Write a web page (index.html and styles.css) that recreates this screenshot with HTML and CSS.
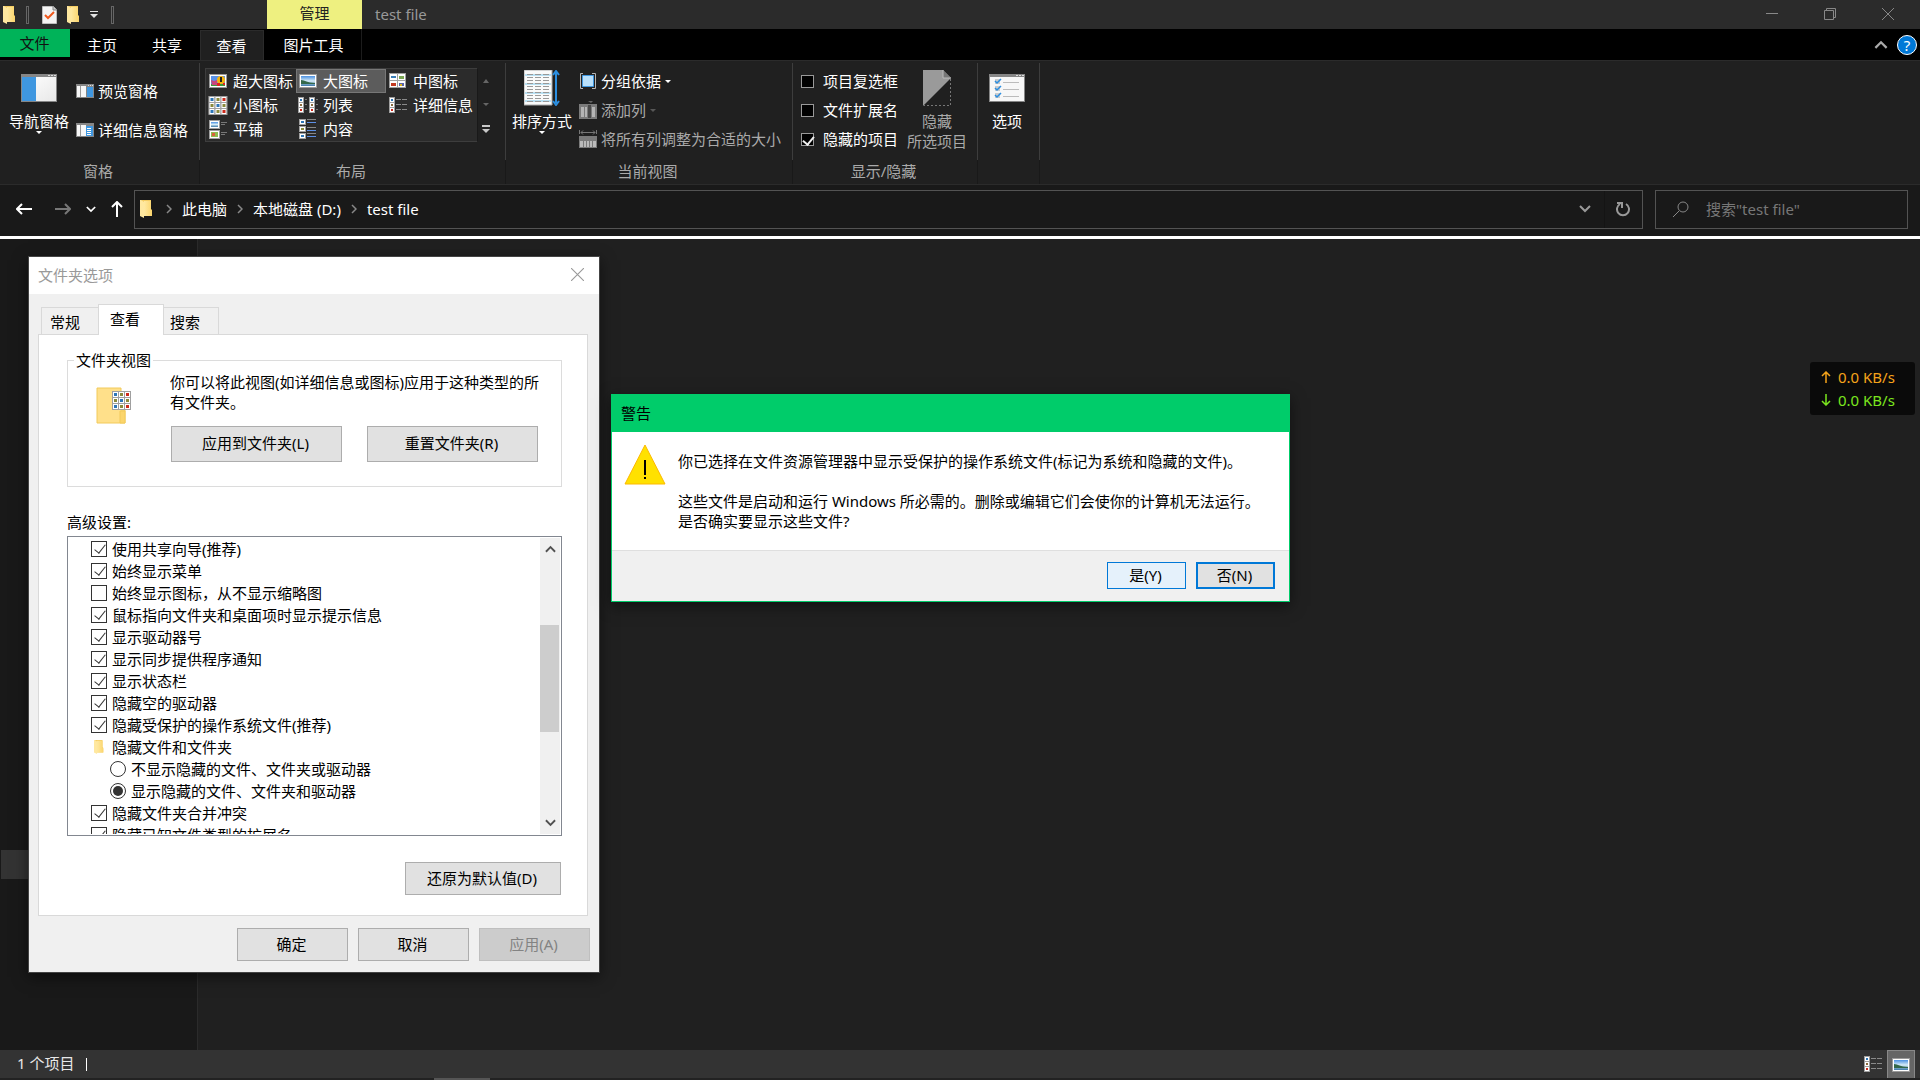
FILE: index.html
```html
<!DOCTYPE html>
<html lang="zh-CN">
<head>
  <meta charset="UTF-8" />
  <meta name="viewport" content="width=device-width, initial-scale=1" />
  <title>test file</title>
  <link rel="stylesheet" href="styles.css">
</head>
<body>

  <!-- 图标 -->
  <svg class="defs" width="0" height="0" aria-hidden="true">
    <defs>
      <linearGradient id="sky" x1="0" y1="0" x2="0" y2="1">
        <stop offset="0" stop-color="#4a90e2" /><stop offset=".5" stop-color="#d6ecf7" /><stop offset="1" stop-color="#3c78a8" />
      </linearGradient>
      <linearGradient id="fold" x1="0" y1="0" x2="1" y2="0">
        <stop offset="0" stop-color="#ffe9a2" /><stop offset="1" stop-color="#fbd56c" />
      </linearGradient>
      <linearGradient id="pane" x1="0" y1="0" x2="1" y2="1">
        <stop offset="0" stop-color="#fff" /><stop offset="1" stop-color="#e8e8e8" />
      </linearGradient>
      <symbol id="folder" viewBox="0 0 13 18">
        <path d="M1 0h10v9l1 1v6H4z" fill="#f5cd63" />
        <path d="M0 0h1l3 2v16l-4-2z" fill="#ffe8a0" />
        <path d="M4 1h7v9l1 1v5H4z" fill="url(#fold)" />
      </symbol>
      <symbol id="pic" viewBox="0 0 18 14">
        <path d="M0 0h18v14H0z" fill="#9a9a9a" /><path d="M1 1h16v12H1z" fill="#fff" />
        <path d="M2 2h14v10H2z" fill="url(#sky)" />
        <path d="M2 6c4 0 6 3 14 3v1H2z" fill="#33684a" />
      </symbol>
      <symbol id="pic-xl" viewBox="0 0 18 14">
        <path d="M0 0h18v14H0z" fill="#9a9a9a" /><path d="M1 1h16v12H1z" fill="#fff" />
        <path d="M2 2h14v10H2z" fill="#5b93e8" /><path d="M2 10h14v2H2z" fill="#3b9a3b" />
        <circle cx="12" cy="6" r="4" fill="#f7b50c" /><path d="M11 3h2v5h-2z" fill="#222" />
        <path d="M2 6l3 1 3-1v5H3z" fill="#c8457c" /><path d="M8 9h3v3H8zM14 9h2v2h-2z" fill="#d22" />
      </symbol>
      <symbol id="th-b" viewBox="0 0 6 6"><path d="M0 0h6v6H0z" fill="#a0a0a0" /><path d="M1 1h5v5H1z" fill="#fff" /><path d="M2 2h3v3H2z" fill="#2d76b8" /></symbol>
      <symbol id="th-g" viewBox="0 0 6 6"><path d="M0 0h6v6H0z" fill="#a0a0a0" /><path d="M1 1h5v5H1z" fill="#fff" /><path d="M2 2h3v3H2z" fill="#8a8a3c" /></symbol>
      <symbol id="th-r" viewBox="0 0 6 6"><path d="M0 0h6v6H0z" fill="#a0a0a0" /><path d="M1 1h5v5H1z" fill="#fff" /><path d="M2 2h3v3H2z" fill="#cc2a1c" /></symbol>
      <symbol id="grid9" viewBox="0 0 19 19">
        <path d="M0 0h19v19H0z" fill="#a0a0a0" />
        <use href="#th-b" width="6" height="6" /><use href="#th-g" x="6" width="6" height="6" /><use href="#th-r" x="12" width="6" height="6" />
        <use href="#th-g" y="6" width="6" height="6" /><use href="#th-b" x="6" y="6" width="6" height="6" /><use href="#th-g" x="12" y="6" width="6" height="6" />
        <use href="#th-b" y="12" width="6" height="6" /><use href="#th-g" x="6" y="12" width="6" height="6" /><use href="#th-r" x="12" y="12" width="6" height="6" />
      </symbol>
      <symbol id="grid4" viewBox="0 0 18 16">
        <path d="M0 0h17v15H0z" fill="#a0a0a0" /><path d="M1 1h7v6H1zM9 1h7v6H9zM1 8h7v6H1zM9 8h7v6H9z" fill="#fff" />
        <path d="M2 3h5v2H2z" fill="#3a7fb8" /><path d="M10 3h5v3h-5z" fill="#7aa653" /><path d="M2 10h5v3H2z" fill="#c33a22" /><path d="M10 10h5v3h-5z" fill="#5a63a8" /><path d="M11 11h2v2h-2z" fill="#e0b81e" />
      </symbol>
      <symbol id="v-list" viewBox="0 0 20 16">
        <path d="M0 0h6v16H0zM11 0h6v16h-6z" fill="#a0a0a0" />
        <path d="M1 1h4v4H1zM1 6h4v4H1zM1 11h4v4H1zM12 1h4v4h-4zM12 6h4v4h-4zM12 11h4v4h-4z" fill="#fff" />
        <path d="M2 2h2v2H2zM13 2h2v2h-2z" fill="#2d76b8" /><path d="M2 7h2v2H2zM13 7h2v2h-2z" fill="#8a6a3c" /><path d="M2 12h2v2H2zM13 12h2v2h-2z" fill="#cc2a1c" />
        <path d="M7 2.500h2M7 7.500h2M7 12.500h2M18 2.500h2M18 7.500h2M18 12.500h2" stroke="#7a7a7a" />
      </symbol>
      <symbol id="v-details" viewBox="0 0 18 16">
        <path d="M0 0h6v16H0z" fill="#a0a0a0" /><path d="M1 1h4v4H1zM1 6h4v4H1zM1 11h4v4H1z" fill="#fff" />
        <path d="M2 2h2v2H2z" fill="#2d76b8" /><path d="M2 7h2v2H2z" fill="#8a6a3c" /><path d="M2 12h2v2H2z" fill="#cc2a1c" />
        <path d="M7 2.500h5M13 2.500h5M7 7.500h5M13 7.500h5M7 12.500h5M13 12.500h5" stroke="#8a8a8a" />
      </symbol>
      <symbol id="v-tiles" viewBox="0 0 18 19">
        <path d="M0 0h11v9H0zM0 10h11v9H0z" fill="#a0a0a0" /><path d="M1 1h9v7H1zM1 11h9v7H1z" fill="#fff" />
        <path d="M2 2h7v5H2z" fill="url(#sky)" /><path d="M2 12h7v5H2z" fill="#8ebc50" /><path d="M3 13h3v3H3z" fill="#d8613a" />
        <path d="M12 2.500h6M12 4.500h4M12 12.500h6M12 14.500h4" stroke="#777" />
      </symbol>
      <symbol id="v-content" viewBox="0 0 18 20">
        <path d="M0 0h7v6H0zM0 7h7v6H0zM0 14h7v6H0z" fill="#a0a0a0" /><path d="M1 1h5v4H1zM1 8h5v4H1zM1 15h5v4H1z" fill="#fff" />
        <path d="M2 2h3v2H2zM2 16h3v2H2z" fill="#2d76b8" /><path d="M2 9h3v2H2z" fill="#8a8a3c" />
        <path d="M8 3.500h9M8 11.500h9M8 17.500h9" stroke="#5c8fe6" /><path d="M8 .5h9M8 8.500h9M8 14.500h9" stroke="#888" />
      </symbol>
      <symbol id="chev" viewBox="0 0 12 8"><path d="M1 1l5 5 5-5" fill="none" stroke="currentColor" stroke-width="2" /></symbol>
      <symbol id="chev-r" viewBox="0 0 6 10"><path d="M1 1l4 4-4 4" fill="none" stroke="currentColor" stroke-width="1.500" /></symbol>
      <symbol id="arrow" viewBox="0 0 16 12"><path d="M1 6h15M6 1L1 6l5 5" fill="none" stroke="currentColor" stroke-width="2" /></symbol>
      <symbol id="cross" viewBox="0 0 12 12"><path d="M0 0l12 12M12 0L0 12" stroke="currentColor" /></symbol>
    </defs>
  </svg>

  <div class="explorer">

    <!-- 标题栏 -->
    <header class="titlebar">
      <div class="quick">
        <svg width="13" height="18"><use href="#folder" /></svg>
        <i class="bar"></i>
        <button class="plain" aria-label="属性">
          <svg width="15" height="18" viewBox="0 0 15 18"><path d="M0 0h11l4 4v14H0z" fill="#f4f4f4" stroke="#888" /><path d="M11 0v4h4" fill="#ccc" stroke="#888" /><path d="M3 9l3 3 6-6" fill="none" stroke="#f0591e" stroke-width="2" /></svg>
        </button>
        <button class="plain" aria-label="新建文件夹"><svg width="13" height="18"><use href="#folder" /></svg></button>
        <button class="plain" aria-label="自定义"><svg width="8" height="8" viewBox="0 0 8 8"><path d="M0 0h8v1H0zM0 3h8L4 7z" fill="#e4e4e4" /></svg></button>
        <i class="bar"></i>
      </div>
      <div class="context-tab">管理</div>
      <h1>test file</h1>
      <div class="win-btns">
        <button class="plain" aria-label="最小化"><svg width="12" height="12" viewBox="0 0 12 12"><path d="M0 5.500h12" stroke="#888" /></svg></button>
        <button class="plain" aria-label="还原"><svg width="12" height="12" viewBox="0 0 12 12"><path d="M.5 2.500h9v9h-9zM2.500 2V.5h9v9H10" fill="none" stroke="#888" /></svg></button>
        <button class="plain" aria-label="关闭"><svg width="12" height="12"><use href="#cross" /></svg></button>
      </div>
    </header>

    <!-- 选项卡 -->
    <nav class="tabs">
      <button class="tab file">文件</button>
      <button class="tab">主页</button>
      <button class="tab">共享</button>
      <button class="tab active">查看</button>
      <button class="tab tools">图片工具</button>
      <div class="tabs-right">
        <button class="plain" aria-label="折叠功能区"><svg class="flip" width="14" height="9"><use href="#chev" /></svg></button>
        <button class="help" aria-label="帮助">?</button>
      </div>
    </nav>

    <!-- 功能区 -->
    <section class="ribbon">
      <div class="group g-panes">
        <div class="group-body">
          <button class="big low">
            <svg width="36" height="28" viewBox="0 0 36 28"><path d="M0 0h36v28H0z" fill="#868686" /><path d="M1 3h34v24H1z" fill="url(#pane)" /><path d="M1 3h14v24H1z" fill="#3f97e0" /><path d="M27 1h2v1h-2zM30 1h2v1h-2zM33 1h2v1h-2z" fill="#ddd" /></svg>
            <span>导航窗格</span>
            <i class="down"></i>
          </button>
          <div class="stack">
            <button class="small">
              <svg width="18" height="14" viewBox="0 0 18 14"><path d="M0 0h18v14H0z" fill="#868686" /><path d="M1 2h9v11H1z" fill="#f7f7f7" /><path d="M4 2h1v11H4z" fill="#999" /><path d="M11 3h6v10h-6z" fill="#3f97e0" /><path d="M12 1h1v1h-1zM14 1h1v1h-1zM16 1h1v1h-1z" fill="#ddd" /></svg>
              预览窗格
            </button>
            <button class="small">
              <svg width="18" height="14" viewBox="0 0 18 14"><path d="M0 0h18v14H0z" fill="#868686" /><path d="M1 2h9v11H1z" fill="#f7f7f7" /><path d="M4 2h1v11H4z" fill="#999" /><path d="M10 3h7v10h-7z" fill="#3f97e0" /><path d="M11 5.500h4M11 7.500h4M11 9.500h4M11 11.500h4" stroke="#fff" /></svg>
              详细信息窗格
            </button>
          </div>
        </div>
        <div class="group-name">窗格</div>
      </div>

      <div class="group g-layout">
        <div class="group-body">
          <div class="gallery">
            <button><svg width="18" height="14"><use href="#pic-xl" /></svg>超大图标</button>
            <button class="on"><svg width="18" height="14"><use href="#pic" /></svg>大图标</button>
            <button><svg width="18" height="16"><use href="#grid4" /></svg>中图标</button>
            <button><svg width="19" height="19"><use href="#grid9" /></svg>小图标</button>
            <button><svg width="20" height="16"><use href="#v-list" /></svg>列表</button>
            <button><svg width="18" height="16"><use href="#v-details" /></svg>详细信息</button>
            <button><svg width="18" height="19"><use href="#v-tiles" /></svg>平铺</button>
            <button><svg width="18" height="20"><use href="#v-content" /></svg>内容</button>
          </div>
          <div class="gallery-nav">
            <button class="plain" aria-label="上一行"><svg width="6" height="4" viewBox="0 0 6 4"><path d="M0 4l3-4 3 4z" fill="#666" /></svg></button>
            <button class="plain" aria-label="下一行"><svg width="6" height="4" viewBox="0 0 6 4"><path d="M0 0h6L3 3z" fill="#666" /></svg></button>
            <button class="plain" aria-label="更多"><svg width="8" height="8" viewBox="0 0 8 8"><path d="M0 0h8v2H0zM0 4h8L4 8z" fill="#c8c8c8" /></svg></button>
          </div>
        </div>
        <div class="group-name">布局</div>
      </div>

      <div class="group g-view">
        <div class="group-body">
          <button class="big">
            <svg width="36" height="36" viewBox="0 0 36 36"><path d="M0 0h28v35H0z" fill="#fafafa" stroke="#aaa" /><path d="M1 4h26v2H1zM1 13h26v2H1zM1 22h26v2H1zM1 30h26v2H1z" fill="#b9e0f2" /><path d="M3 4.500h22M3 7.500h22M3 10.500h22M3 13.500h22M3 16.500h22M3 19.500h22M3 22.500h22M3 25.500h22M3 28.500h22M3 31.500h22" stroke="#999" stroke-dasharray="6 2" /><path d="M32 2v31M29 5l3-4 3 4M29 31l3 4 3-4" fill="none" stroke="#2b8ee0" stroke-width="2" /></svg>
            <span>排序方式</span>
            <i class="down"></i>
          </button>
          <div class="stack">
            <button class="small">
              <svg width="18" height="17" viewBox="0 0 18 17"><path d="M4 .5H1.500v15H4M13 .5h3.500v15H13" fill="none" stroke="#b5b5b5" /><path d="M3.500 2.500h11v11h-11z" fill="#b9e0fb" stroke="#3f97e0" /></svg>
              分组依据<i class="down"></i>
            </button>
            <button class="small" disabled>
              <svg width="18" height="18" viewBox="0 0 18 18"><path d="M9 0h5l-2 2z" fill="#666" /><path d="M0 3h18v15H0z" fill="#7b7b7b" /><path d="M2 6h3v10H2zM6 6h2v10H6zM13 6h3v10h-3z" fill="#b5b5b5" /><path d="M9 4h3v13H9z" fill="#4a4a4a" /></svg>
              添加列<i class="down"></i>
            </button>
            <button class="small" disabled>
              <svg width="18" height="18" viewBox="0 0 18 18"><path d="M.5 0v4M17.500 0v4M2 2.500h14M4 .5l-2 2 2 2M14 .5l2 2-2 2" fill="none" stroke="#777" /><path d="M0 6h18v12H0z" fill="#7b7b7b" /><path d="M1 11h3v6H1zM5 11h2v6H5zM8 11h2v6H8zM11 11h2v6h-2zM14 11h3v6h-3z" fill="#bbb" /></svg>
              将所有列调整为合适的大小
            </button>
          </div>
        </div>
        <div class="group-name">当前视图</div>
      </div>

      <div class="group g-show">
        <div class="group-body">
          <div class="checks">
            <label><input type="checkbox" class="dark-check">项目复选框</label>
            <label><input type="checkbox" class="dark-check">文件扩展名</label>
            <label><input type="checkbox" class="dark-check" checked>隐藏的项目</label>
          </div>
          <button class="big" disabled>
            <svg width="28" height="36" viewBox="0 0 28 36"><path d="M0 0h20l8 8L0 36z" fill="#9a9a9a" /><path d="M20 0v8h8" fill="#777" stroke="#bbb" /><path d="M27.500 9v26.500H1" fill="none" stroke="#777" stroke-dasharray="2 2" /></svg>
            <span>隐藏<br>所选项目</span>
          </button>
        </div>
        <div class="group-name">显示/隐藏</div>
      </div>

      <div class="group g-options">
        <div class="group-body">
          <button class="big low">
            <svg width="36" height="28" viewBox="0 0 36 28"><path d="M0 0h36v28H0z" fill="#868686" /><path d="M1 3h34v24H1z" fill="#f7f7f7" /><path d="M27 1h2v1h-2zM30 1h2v1h-2zM33 1h2v1h-2z" fill="#ddd" /><path d="M6 5h5v5H6zM6 12h5v5H6zM6 19h5v5H6z" fill="#ccc" /><path d="M6 7l2 2 4-4M6 14l2 2 4-4M6 21l2 2 4-4" fill="none" stroke="#2b8ee0" stroke-width="1.500" /><path d="M14 8.500h16M14 15.500h16M14 22.500h16" stroke="#bbb" /></svg>
            <span>选项</span>
          </button>
        </div>
        <div class="group-name"></div>
      </div>
    </section>

    <!-- 地址栏 -->
    <div class="address-row">
      <div class="history">
        <button class="plain" aria-label="后退"><svg width="16" height="12"><use href="#arrow" /></svg></button>
        <button class="plain dim" aria-label="前进"><svg class="flip-x" width="16" height="12"><use href="#arrow" /></svg></button>
        <button class="plain" aria-label="最近"><svg width="10" height="7"><use href="#chev" /></svg></button>
        <button class="plain" aria-label="上移"><svg width="12" height="16" viewBox="0 0 12 16"><path d="M6 1v15M1 6l5-5 5 5" fill="none" stroke="currentColor" stroke-width="2" /></svg></button>
      </div>
      <div class="address">
        <svg width="13" height="18"><use href="#folder" /></svg>
        <svg class="sep" width="6" height="10"><use href="#chev-r" /></svg>
        <a href="#">此电脑</a>
        <svg class="sep" width="6" height="10"><use href="#chev-r" /></svg>
        <a href="#">本地磁盘 (D:)</a>
        <svg class="sep" width="6" height="10"><use href="#chev-r" /></svg>
        <a href="#">test file</a>
        <div class="address-btns">
          <button class="plain" aria-label="以前的位置"><svg width="12" height="8"><use href="#chev" /></svg></button>
          <button class="plain" aria-label="刷新"><svg width="15" height="15" viewBox="0 0 15 15"><path d="M10 2a6 6 0 1 1-6 0M1 1h5v5" fill="none" stroke="currentColor" stroke-width="2" /></svg></button>
        </div>
      </div>
      <label class="search">
        <svg width="16" height="16" viewBox="0 0 16 16"><circle cx="10" cy="6" r="5" fill="none" stroke="currentColor" /><path d="M6 10l-6 6" stroke="currentColor" /></svg>
        <input type="text" aria-label="搜索" placeholder='搜索"test file"'>
      </label>
    </div>

    <!-- 内容 -->
    <main class="content">
      <aside class="nav-pane"><div class="nav-item"></div></aside>
      <div class="files"></div>
    </main>

    <!-- 状态栏 -->
    <footer class="status">
      <span class="count">1 个项目</span>
      <div class="view-switch">
        <button class="plain" aria-label="详细信息"><svg width="18" height="16"><use href="#v-details" /></svg></button>
        <button class="plain on" aria-label="大图标"><svg width="18" height="14"><use href="#pic" /></svg></button>
      </div>
    </footer>
    <div class="taskbar-edge"><i></i></div>
  </div>

  <!-- 文件夹选项 -->
  <div class="window options" role="dialog" aria-label="文件夹选项">
    <div class="window-title">
      <h2>文件夹选项</h2>
      <button class="plain" aria-label="关闭"><svg width="13" height="13" viewBox="0 0 12 12"><use href="#cross" /></svg></button>
    </div>
    <div class="page-tabs">
      <button>常规</button>
      <button class="current">查看</button>
      <button>搜索</button>
    </div>
    <div class="page">
      <fieldset>
        <legend>文件夹视图</legend>
        <svg width="36" height="38" viewBox="0 0 36 38">
          <path d="M1 1h24v22h4v13H1z" fill="#ffe08a" stroke="#f2ca5a" /><path d="M24 24h5v12h-5z" fill="#fbd56c" stroke="#f2ca5a" />
          <use href="#grid9" x="16" y="4" width="19" height="19" />
        </svg>
        <div>
          <p>你可以将此视图(如详细信息或图标)应用于这种类型的所有文件夹。</p>
          <div class="apply-row">
            <button class="btn">应用到文件夹(L)</button>
            <button class="btn">重置文件夹(R)</button>
          </div>
        </div>
      </fieldset>
      <h3>高级设置:</h3>
      <div class="listbox">
        <ul>
          <li><label><input type="checkbox" checked>使用共享向导(推荐)</label></li>
          <li><label><input type="checkbox" checked>始终显示菜单</label></li>
          <li><label><input type="checkbox">始终显示图标，从不显示缩略图</label></li>
          <li><label><input type="checkbox" checked>鼠标指向文件夹和桌面项时显示提示信息</label></li>
          <li><label><input type="checkbox" checked>显示驱动器号</label></li>
          <li><label><input type="checkbox" checked>显示同步提供程序通知</label></li>
          <li><label><input type="checkbox" checked>显示状态栏</label></li>
          <li><label><input type="checkbox" checked>隐藏空的驱动器</label></li>
          <li><label><input type="checkbox" checked>隐藏受保护的操作系统文件(推荐)</label></li>
          <li class="branch"><svg width="16" height="14" viewBox="0 0 13 18"><use href="#folder" /></svg>隐藏文件和文件夹</li>
          <li class="sub"><label><input type="radio" name="hidden">不显示隐藏的文件、文件夹或驱动器</label></li>
          <li class="sub"><label><input type="radio" name="hidden" checked>显示隐藏的文件、文件夹和驱动器</label></li>
          <li><label><input type="checkbox" checked>隐藏文件夹合并冲突</label></li>
          <li><label><input type="checkbox" checked>隐藏已知文件类型的扩展名</label></li>
        </ul>
        <div class="scroll">
          <button class="plain" aria-label="向上"><svg class="flip" width="11" height="8"><use href="#chev" /></svg></button>
          <div class="thumb"></div>
          <button class="plain" aria-label="向下"><svg width="11" height="8"><use href="#chev" /></svg></button>
        </div>
      </div>
      <button class="btn restore">还原为默认值(D)</button>
    </div>
    <div class="window-btns">
      <button class="btn">确定</button>
      <button class="btn">取消</button>
      <button class="btn" disabled>应用(A)</button>
    </div>
  </div>

  <!-- 警告 -->
  <div class="window warning" role="alertdialog" aria-label="警告">
    <h2>警告</h2>
    <div class="message">
      <svg width="42" height="42" viewBox="0 0 42 42"><path d="M21 1l20 39H1z" fill="#ffe100" stroke="#fcb900" /><path d="M20 16h2v15h-2zM20 33h2v2h-2z" fill="#000" /></svg>
      <div>
        <p>你已选择在文件资源管理器中显示受保护的操作系统文件(标记为系统和隐藏的文件)。</p>
        <p>这些文件是启动和运行 Windows 所必需的。删除或编辑它们会使你的计算机无法运行。<br>是否确实要显示这些文件?</p>
      </div>
    </div>
    <div class="answer">
      <button class="btn hover">是(Y)</button>
      <button class="btn default">否(N)</button>
    </div>
  </div>

  <!-- 网速 -->
  <div class="net">
    <div class="up"><svg width="10" height="12" viewBox="0 0 10 12"><path d="M5 1v11M1 5l4-4 4 4" fill="none" stroke="currentColor" stroke-width="1.500" /></svg>0.0 KB/s</div>
    <div class="dn"><svg width="10" height="12" viewBox="0 0 10 12"><path d="M5 0v11M1 7l4 4 4-4" fill="none" stroke="currentColor" stroke-width="1.500" /></svg>0.0 KB/s</div>
  </div>

</body>
</html>
```
FILE: styles.css
```css
* {
  box-sizing: border-box;
}
html, body {
  margin: 0; padding: 0;
  height: 100vh;
  overflow: hidden;
  background: #202020;
  color: white;
  font-family: "Noto Sans", "Noto Sans CJK SC", sans-serif;
  font-size: 15px;
  line-height: 20px;
}
h1, h2, h3, p, ul {
  margin: 0; padding: 0;
  font-size: 15px;
  font-weight: normal;
}
svg {
  display: block;
  flex: none;
}
.defs {
  position: absolute;
}
button, input {
  font: inherit;
  color: inherit;
}
button {
  margin: 0; padding: 0;
  border: none;
  background: none;
  white-space: nowrap;
}
.plain {
  display: flex;
  align-items: center;
  justify-content: center;
}
.flip {
  transform: scaleY(-1);
}
.flip-x {
  transform: scaleX(-1);
}
.down {
  width: 0; height: 0;
  border: 3px solid transparent;
  border-top-color: currentColor;
  border-bottom: none;
}

.explorer {
  display: flex;
  flex-direction: column;
  height: 100vh;
}

/* 标题栏 */
.titlebar {
  display: flex;
  height: 29px;
  background: #2b2b2b;
  color: #999;
}
.quick {
  display: flex;
  align-items: center;
  gap: 10px;
  width: 267px;
  padding-left: 3px;
}
.quick .bar {
  width: 3px; height: 18px;
  border: 1px solid #666;
}
.quick .bar + .plain {
  margin-left: 3px;
}
.quick .plain + .bar {
  margin-left: 3px;
}
.context-tab {
  width: 95px;
  background: #eef080;
  color: #222;
  line-height: 26px;
  text-align: center;
}
.titlebar h1 {
  padding-left: 13px;
  line-height: 28px;
}
.win-btns {
  display: flex;
  margin-left: auto;
  padding-right: 3px;
  color: #888;
}
.win-btns .plain {
  width: 58px; height: 28px;
}

/* 选项卡 */
.tabs {
  display: flex;
  height: 31px;
  background: #000;
}
.tab {
  width: 65px;
  padding-right: 1px;
  line-height: 28px;
}
.tab.file {
  width: 70px; height: 28px;
  background: #00b359;
  color: #111;
  line-height: 28px;
}
.tab.active {
  width: 64px;
  margin-top: 1px;
  background: #202020;
  border: 1px solid #2b2b2b;
  border-bottom: none;
  line-height: 26px;
}
.tab.tools {
  width: 95px;
  margin-left: 3px;
  border-right: 1px solid #1c1c1c;
}
.tabs-right {
  display: flex;
  align-items: center;
  gap: 9px;
  margin-left: auto;
  padding-right: 3px;
  color: #aaa;
}
.help {
  width: 20px; height: 20px;
  border: 1px solid #fff;
  border-radius: 50%;
  background: #0078d7;
  color: white;
  line-height: 18px;
}

/* 功能区 */
.ribbon {
  display: flex;
  padding-top: 2px;
  border-top: 1px solid #2b2b2b;
  border-bottom: 1px solid #2b2b2b;
  background: #202020;
}
.group-body {
  display: flex;
  align-items: flex-start;
  height: 97px;
  border-right: 1px solid #3d3d3d;
}
.group-name {
  height: 24px;
  padding-right: 3px;
  border-right: 1px solid #191919;
  color: #aaa;
  line-height: 23px;
  text-align: center;
}
.g-panes { width: 200px; }
.g-layout { width: 306px; }
.g-view { width: 287px; }
.g-show { width: 185px; }
.g-options { width: 62px; }
.big {
  display: flex;
  flex-direction: column;
  align-items: center;
  padding-top: 7px;
}
.big svg {
  margin-bottom: 5px;
}
.big.low {
  padding-top: 11px;
}
.big.low svg {
  margin-bottom: 9px;
}
.big:disabled, .small:disabled {
  color: #aaa;
}
.small {
  display: flex;
  align-items: center;
  gap: 4px;
}
.small:disabled .down {
  opacity: 0.4;
}
.g-panes .big {
  margin: 0 7px 0 9px;
}
.g-panes .stack {
  display: grid;
  gap: 19px;
  padding-top: 18px;
}
.g-view .big {
  margin: 0 7px 0 6px;
}
.g-view .stack {
  display: grid;
  gap: 9px;
  padding-top: 8px;
}
.g-show .checks {
  display: grid;
  gap: 9px;
  padding: 8px 9px 0 8px;
}
.g-show label {
  display: flex;
  align-items: center;
  gap: 9px;
}
.g-options .big {
  width: 100%;
  padding-right: 3px;
}
.dark-check {
  appearance: none;
  width: 13px; height: 13px;
  margin: 0;
  border: 1px solid #999;
  background: #000;
}
.dark-check:checked::before {
  content: "";
  display: block;
  width: 5px; height: 9px;
  margin: 0 0 0 3px;
  border: solid #eee;
  border-width: 0 2px 2px 0;
  transform: rotate(40deg);
}
.gallery {
  display: grid;
  grid-template-columns: 90px 90px 91px;
  grid-auto-rows: 24px;
  margin: 5px 0 0 5px;
  border: 1px solid #3d3d3d;
  border-right: none;
  background: #2b2b2b;
}
.gallery button {
  display: flex;
  align-items: center;
  border: 1px solid transparent;
  padding-left: 1px;
}
.gallery button svg {
  width: 20px;
  margin-right: 5px;
}
.gallery .on {
  border-color: #777;
  background: #5c5c5c;
}
.gallery-nav {
  display: grid;
  grid-template-rows: repeat(3, 24px);
  width: 16px;
  margin-top: 6px;
  border-left: 1px solid #191919;
}

/* 地址栏 */
.address-row {
  display: flex;
  align-items: center;
  height: 54px;
  padding: 0 12px 3px 0;
  border-bottom: 3px solid #fff;
  background: #191919;
}
.history {
  display: flex;
  align-items: center;
  width: 134px;
  padding-left: 16px;
}
.history .plain {
  margin-right: 15px;
}
.history .plain:first-child {
  margin-right: 23px;
}
.history .plain:last-child {
  margin-right: 0;
}
.dim {
  color: #777;
}
.address {
  flex: 1;
  display: flex;
  align-items: center;
  height: 39px;
  padding-left: 5px;
  border: 1px solid #535353;
}
.address a {
  color: white;
  text-decoration: none;
}
.address .sep {
  margin: 0 10px;
  color: #888;
}
.address svg + .sep {
  margin-left: 13px;
}
.address-btns {
  display: flex;
  margin-left: auto;
  color: #999;
}
.address-btns .plain {
  width: 38px; height: 37px;
}
.address-btns .plain + .plain {
  border-left: 1px solid #141414;
}
.search {
  display: flex;
  align-items: center;
  gap: 17px;
  width: 253px; height: 39px;
  margin-left: 12px;
  padding-left: 17px;
  border: 1px solid #535353;
  color: #888;
}
.search input {
  width: 180px;
  padding: 0;
  border: none;
  outline: none;
  background: none;
}
.search input::placeholder {
  color: #777;
  opacity: 1;
}

/* 内容 */
.content {
  flex: 1;
  display: flex;
}
.nav-pane {
  width: 198px;
  padding: 611px 1px 0;
  border-right: 1px solid #2b2b2b;
  background: #191919;
}
.nav-item {
  height: 29px;
  background: #333;
}
.files {
  flex: 1;
}

/* 状态栏 */
.status {
  display: flex;
  height: 28px;
  background: #333;
}
.count {
  padding-left: 17px;
  color: #e8e8e8;
  line-height: 27px;
}
.count::after {
  content: "";
  display: inline-block;
  width: 1px; height: 13px;
  margin-left: 12px;
  background: #fff;
  vertical-align: -2px;
}
.view-switch {
  display: flex;
  margin-left: auto;
  padding-right: 5px;
}
.view-switch .plain {
  width: 28px;
}
.view-switch .on {
  border: 1px solid #888;
  border-bottom: none;
  background: #666;
}
.taskbar-edge {
  height: 2px;
  background: #222;
}
.taskbar-edge i {
  display: block;
  width: 56px; height: 2px;
  margin-left: 434px;
  background: #555;
}

/* 窗口 */
.window {
  position: absolute;
  color: #000;
  box-shadow: 0 4px 14px rgba(0,0,0,0.5);
}
.btn {
  height: 33px;
  padding: 0 2px 2px 0;
  border: 1px solid #adadad;
  background: #e1e1e1;
}
.btn:disabled {
  border-color: #bfbfbf;
  background: #ccc;
  color: #838383;
}
.options {
  top: 256px; left: 28px;
  width: 572px;
  border: 1px solid #444;
  background: #f0f0f0;
}
.window-title {
  display: flex;
  align-items: center;
  justify-content: space-between;
  height: 37px;
  padding: 0 15px 2px 9px;
  background: #fff;
  color: #999;
}
.page-tabs {
  display: flex;
  align-items: flex-end;
  padding: 10px 0 0 12px;
}
.page-tabs button {
  width: 55px; height: 27px;
  padding: 2px 8px 0;
  border: 1px solid #d9d9d9;
  border-bottom: none;
  text-align: left;
}
.page-tabs button:first-child {
  width: 57px;
  border-right: none;
}
.page-tabs button:last-child {
  padding-left: 6px;
  border-left: none;
}
.page-tabs .current {
  position: relative;
  width: 66px; height: 31px;
  margin-bottom: -1px;
  padding: 0 11px 2px;
  background: #fff;
}
.page {
  display: flex;
  flex-direction: column;
  margin: 0 11px 0 9px;
  padding: 15px 25px 20px 28px;
  border: 1px solid #d9d9d9;
  background: #fff;
}
fieldset {
  display: flex;
  align-items: flex-start;
  gap: 38px;
  margin: 0;
  padding: 2px 16px 24px 28px;
  border: 1px solid #dcdcdc;
}
legend {
  margin-left: -22px;
  padding: 0 2px;
}
fieldset > svg {
  margin-top: 15px;
}
.apply-row {
  display: flex;
  gap: 25px;
  margin: 14px 0 0 1px;
}
.apply-row .btn {
  width: 171px; height: 36px;
}
.page h3 {
  margin: 25px 0 4px;
}
.listbox {
  display: flex;
  height: 300px;
  padding: 1px;
  border: 1px solid #828790;
}
.listbox ul {
  flex: 1;
  overflow: hidden;
  list-style: none;
  padding-left: 22px;
}
.listbox li, .listbox label {
  display: flex;
  align-items: center;
  height: 22px;
}
.listbox input {
  appearance: none;
  width: 16px; height: 16px;
  margin: 0 5px 0 0;
  border: 1px solid #333;
  background: #fff;
}
.listbox input[type="checkbox"]:checked::before {
  content: "";
  display: block;
  width: 5px; height: 10px;
  margin: 0 0 0 5px;
  border: solid #333;
  border-width: 0 1px 1px 0;
  transform: rotate(38deg);
}
.listbox input[type="radio"] {
  padding: 2px;
  border-radius: 50%;
}
.listbox input[type="radio"]:checked::before {
  content: "";
  display: block;
  width: 10px; height: 10px;
  border-radius: 50%;
  background: #333;
}
.branch svg {
  margin-right: 5px;
}
.listbox .sub {
  padding-left: 19px;
}
.scroll {
  display: flex;
  flex-direction: column;
  width: 20px;
  background: #f0f0f0;
  color: #505050;
}
.scroll .plain {
  height: 22px;
}
.thumb {
  height: 107px;
  margin: 65px 1px auto 0;
  background: #cdcdcd;
}
.restore {
  width: 156px;
  align-self: flex-end;
  margin: 26px 1px 0 0;
}
.window-btns {
  display: flex;
  justify-content: flex-end;
  gap: 10px;
  padding: 12px 9px 11px;
}
.window-btns .btn {
  width: 111px;
}

.warning {
  top: 394px; left: 611px;
  width: 679px;
  border: 1px solid #00cc6a;
  background: #f0f0f0;
}
.warning h2 {
  height: 37px;
  padding-left: 9px;
  background: #00cc6a;
  line-height: 37px;
}
.message {
  display: flex;
  gap: 12px;
  padding: 12px 12px 19px;
  border-bottom: 1px solid #dfdfdf;
  background: #fff;
}
.message p {
  margin-top: 20px;
  white-space: nowrap;
}
.message p:first-child {
  margin-top: 7px;
}
.answer {
  display: flex;
  justify-content: flex-end;
  gap: 10px;
  padding: 11px 14px 12px;
}
.answer .btn {
  width: 79px; height: 27px;
}
.answer .hover {
  border-color: #0078d7;
  background: #e5f1fb;
}
.answer .default {
  border: 2px solid #0078d7;
}

/* 网速 */
.net {
  position: absolute;
  top: 362px; right: 5px;
  padding: 3px 9px 4px 11px;
  border-radius: 3px;
  background: #0a0a0a;
}
.net div {
  display: flex;
  align-items: center;
  gap: 7px;
  height: 23px;
  width: 85px;
  white-space: nowrap;
}
.up { color: #f5a31a; }
.dn { color: #7be61e; }
```
